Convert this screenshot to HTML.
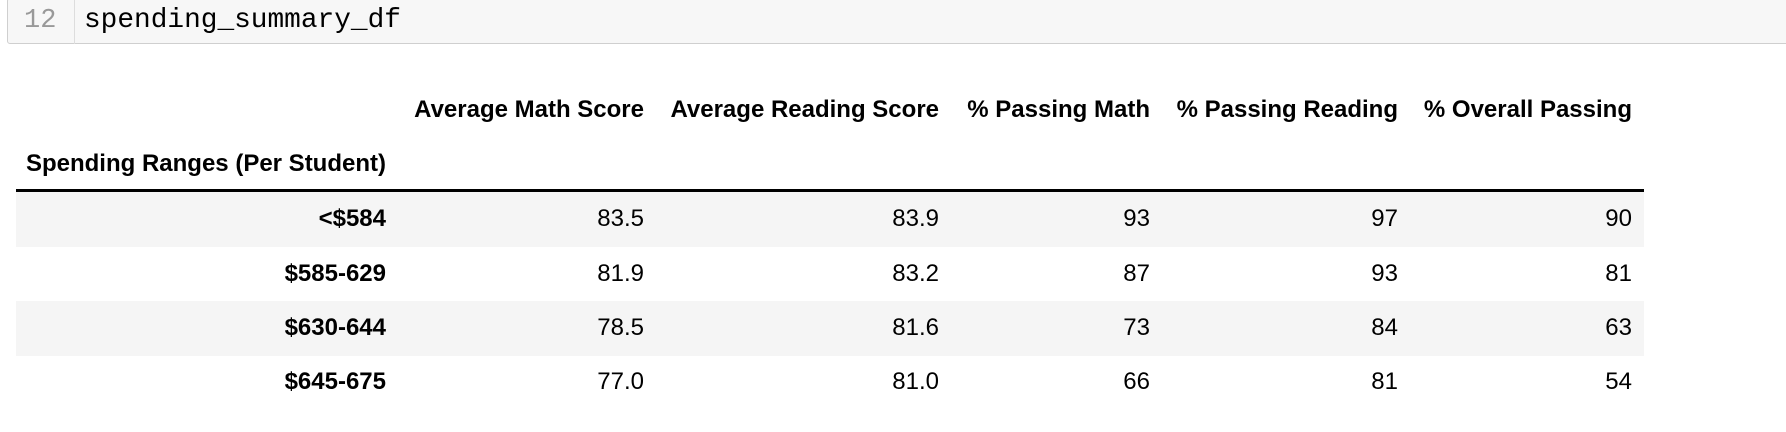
<!DOCTYPE html>
<html><head><meta charset="utf-8"><style>
body{margin:0;width:1786px;height:432px;background:#fff;position:relative;overflow:hidden;font-family:"Liberation Sans",Arial,sans-serif;}
.cell{position:absolute;left:7px;top:-2px;width:1790px;height:46px;background:#f7f7f7;border:1px solid #cfcfcf;border-radius:3px;box-sizing:border-box;}
.gut{position:absolute;left:74px;top:0;width:1px;height:44px;background:#ddd;}
.ln{position:absolute;left:24px;top:3px;font-family:"Liberation Mono",monospace;font-size:27px;color:#999;line-height:36px;}
.code{position:absolute;left:84px;top:3px;font-family:"Liberation Mono",monospace;font-size:27.8px;color:#000;line-height:36px;}
.t{position:absolute;font-size:24px;line-height:26px;white-space:nowrap;color:#000;}
.b{font-weight:bold;}
.bg{position:absolute;left:16px;width:1628px;height:55px;background:#f5f5f5;}
.line{position:absolute;left:16px;top:189px;width:1628px;height:3px;background:#000;}
</style></head><body>
<div class="cell"></div>
<div class="gut"></div>
<div class="ln">12</div>
<div class="code">spending_summary_df</div>

<div class="bg" style="top:192px"></div>
<div class="bg" style="top:301px"></div>
<div class="line"></div>

<div class="t b" style="right:1142px;top:97px">Average Math Score</div>
<div class="t b" style="right:847px;top:97px">Average Reading Score</div>
<div class="t b" style="right:636px;top:97px">% Passing Math</div>
<div class="t b" style="right:388px;top:97px">% Passing Reading</div>
<div class="t b" style="right:154px;top:97px">% Overall Passing</div>
<div class="t b" style="right:1400px;top:151px">Spending Ranges (Per Student)</div>

<div class="t b" style="right:1400px;top:206px">&lt;$584</div>
<div class="t" style="right:1142px;top:206px">83.5</div>
<div class="t" style="right:847px;top:206px">83.9</div>
<div class="t" style="right:636px;top:206px">93</div>
<div class="t" style="right:388px;top:206px">97</div>
<div class="t" style="right:154px;top:206px">90</div>

<div class="t b" style="right:1400px;top:261px">$585-629</div>
<div class="t" style="right:1142px;top:261px">81.9</div>
<div class="t" style="right:847px;top:261px">83.2</div>
<div class="t" style="right:636px;top:261px">87</div>
<div class="t" style="right:388px;top:261px">93</div>
<div class="t" style="right:154px;top:261px">81</div>

<div class="t b" style="right:1400px;top:315px">$630-644</div>
<div class="t" style="right:1142px;top:315px">78.5</div>
<div class="t" style="right:847px;top:315px">81.6</div>
<div class="t" style="right:636px;top:315px">73</div>
<div class="t" style="right:388px;top:315px">84</div>
<div class="t" style="right:154px;top:315px">63</div>

<div class="t b" style="right:1400px;top:369px">$645-675</div>
<div class="t" style="right:1142px;top:369px">77.0</div>
<div class="t" style="right:847px;top:369px">81.0</div>
<div class="t" style="right:636px;top:369px">66</div>
<div class="t" style="right:388px;top:369px">81</div>
<div class="t" style="right:154px;top:369px">54</div>
</body></html>
